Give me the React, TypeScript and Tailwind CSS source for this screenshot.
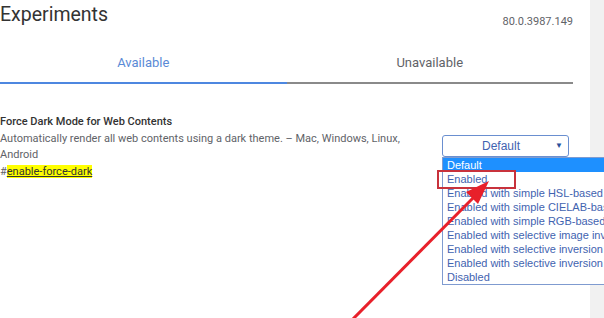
import React from 'react'

const options = [
  'Default',
  'Enabled',
  'Enabled with simple HSL-based inversion',
  'Enabled with simple CIELAB-based inversion',
  'Enabled with simple RGB-based inversion',
  'Enabled with selective image inversion',
  'Enabled with selective inversion of non-image elements',
  'Enabled with selective inversion of everything',
  'Disabled',
]

export default function App() {
  return (
    <div className="relative flex h-[318px] w-[604px] overflow-hidden bg-white font-['Roboto',sans-serif]">
      {/* Main column */}
      <div className="w-[573px] shrink-0">
        {/* Header */}
        <div className="flex h-[45px] items-start justify-between">
          <h1 className="mt-[4px] text-[19.5px] leading-[22px] text-[#333]">Experiments</h1>
          <span className="mt-[15px] text-[11px] leading-[14px] text-[#5f6368]">80.0.3987.149</span>
        </div>

        {/* Tabs */}
        <div className="flex">
          <div className="flex h-[39px] flex-1 items-center justify-center border-b-2 border-[#4d87e0] pb-[1px] text-[13px] text-[#5a8ad6]">
            Available
          </div>
          <div className="flex h-[39px] flex-1 items-center justify-center border-b-2 border-[#8a8a8a] pb-[1px] text-[13px] text-[#5f6368]">
            Unavailable
          </div>
        </div>

        {/* Experiment row */}
        <div className="mt-[29px] flex">
          <div className="w-[420px] text-[11px] leading-[16.5px]">
            <div className="mt-[1px] font-medium text-[#333]">Force Dark Mode for Web Contents</div>
            <p className="text-[#5f6368]">
              Automatically render all web contents using a dark theme. – Mac, Windows, Linux, Android
            </p>
            <div className="text-[#5f6368]">
              #<a className="bg-[#ffff00] text-[#333] underline">enable-force-dark</a>
            </div>
          </div>
          <div className="ml-[22px] mt-[22px]">
            <div className="flex h-[22px] w-[127px] items-center rounded-[3px] border border-[#6a8fd0] font-['Liberation_Sans',sans-serif] text-[12px] text-[#3f63b0]">
              <span className="flex-1 pl-[4px] text-center">Default</span>
              <span className="mr-[5px] text-[8px] text-[#2a4f9a]">▼</span>
            </div>
          </div>
        </div>
      </div>

      <div className="flex-1" />
      <div className="w-[14px] shrink-0 bg-[#f1f1f1]" />

      {/* Open dropdown list */}
      <div className="absolute left-[442px] top-[157px] w-[190px] border border-[#7f9bd0] bg-white font-['Liberation_Sans',sans-serif] text-[11px] leading-[14px]">
        {options.map((o, i) => (
          <div
            key={o}
            className={
              i === 0
                ? 'h-[14px] whitespace-nowrap bg-[#1e90ff] pl-[4px] text-white'
                : 'h-[14px] whitespace-nowrap pl-[4px] text-[#3f63b0]'
            }
          >
            {o}
          </div>
        ))}
      </div>

      {/* Annotation box */}
      <div className="absolute left-[437px] top-[170px] h-[19px] w-[79px] border-2 border-[#c8323c]" />

      {/* Annotation arrow */}
      <svg className="absolute left-0 top-0" width="604" height="318" viewBox="0 0 604 318">
        <line x1="350" y1="322" x2="476" y2="195" stroke="#e8202a" strokeWidth="3" />
        <polygon points="489,181 466,192 478,204" fill="#e8202a" />
      </svg>
    </div>
  )
}
